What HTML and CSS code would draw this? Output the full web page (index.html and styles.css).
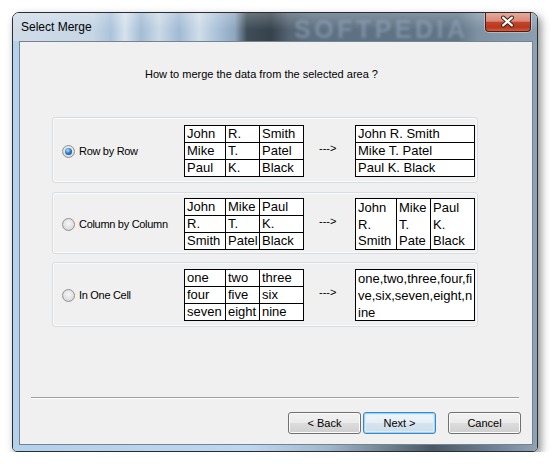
FILE: index.html
```html
<!DOCTYPE html>
<html>
<head>
<meta charset="utf-8">
<link rel="stylesheet" href="styles.css">
</head>
<body>
<div class="window">
  <div class="titlebar">
    <span class="title">Select Merge</span>
    <span class="watermark">SOFTPEDIA</span>
    <span class="close">
      <svg width="46" height="19" viewBox="0 0 46 19">
        <path d="M18.5 5.5 L27.5 13.5 M27.5 5.5 L18.5 13.5" stroke="#3a1610" stroke-width="4.2" stroke-linecap="round" fill="none"/>
        <path d="M18.5 5.5 L27.5 13.5 M27.5 5.5 L18.5 13.5" stroke="#ffffff" stroke-width="2.2" stroke-linecap="round" fill="none"/>
      </svg>
    </span>
  </div>
  <div class="frame">
    <div class="client">
      <p class="question">How to merge the data from the selected area ?</p>

      <div class="panel p1">
        <div class="option"><span class="radio checked"></span><span>Row by Row</span></div>
        <div class="grid g3">
          <span>John</span><span>R.</span><span>Smith</span>
          <span>Mike</span><span>T.</span><span>Patel</span>
          <span>Paul</span><span>K.</span><span>Black</span>
        </div>
        <span class="arrow">---&gt;</span>
        <div class="grid g1">
          <span>John R. Smith</span>
          <span>Mike T. Patel</span>
          <span>Paul K. Black</span>
        </div>
      </div>

      <div class="panel p2">
        <div class="option"><span class="radio"></span><span>Column by Column</span></div>
        <div class="grid g3">
          <span>John</span><span>Mike</span><span>Paul</span>
          <span>R.</span><span>T.</span><span>K.</span>
          <span>Smith</span><span>Patel</span><span>Black</span>
        </div>
        <span class="arrow">---&gt;</span>
        <div class="grid gcol">
          <span>John<br>R.<br>Smith</span>
          <span>Mike<br>T.<br>Pate</span>
          <span>Paul<br>K.<br>Black</span>
        </div>
      </div>

      <div class="panel p3">
        <div class="option"><span class="radio"></span><span>In One Cell</span></div>
        <div class="grid g3">
          <span>one</span><span>two</span><span>three</span>
          <span>four</span><span>five</span><span>six</span>
          <span>seven</span><span>eight</span><span>nine</span>
        </div>
        <span class="arrow">---&gt;</span>
        <div class="grid gone">
          <span>one,two,three,four,fi<br>ve,six,seven,eight,n<br>ine</span>
        </div>
      </div>

      <div class="sep"></div>

      <div class="buttons">
        <button class="btn">&lt; Back</button>
        <button class="btn default">Next &gt;</button>
        <button class="btn cancel">Cancel</button>
      </div>
    </div>
  </div>
</div>
</body>
</html>
```

FILE: styles.css
```css
html, body {
  margin: 0;
  padding: 0;
  background: #ffffff;
  font-family: "Liberation Sans", Arial, sans-serif;
}

.window {
  margin: 12px 0 0 12px;
  width: 526px;
  height: 440px;
  box-sizing: border-box;
  border: 1px solid #2a2e33;
  border-radius: 7px 7px 5px 5px;
  overflow: hidden;
  box-shadow: 3px 4px 9px rgba(0, 0, 0, 0.45);
  display: flex;
  flex-direction: column;
}

.titlebar {
  position: relative;
  height: 28px;
  flex: none;
  display: flex;
  align-items: flex-start;
  background:
    linear-gradient(to bottom, rgba(255,255,255,0.22), rgba(255,255,255,0) 60%),
    linear-gradient(to right,
      #cfdbe7 0px, #c6d6e5 80px, #abc3da 98px, #d6e2ed 112px, #a3bcd5 128px,
      #cbd9e7 146px, #a1bad4 166px, #d0dde9 186px, #aac2d9 204px, #8ea6be 222px,
      #3f4d58 234px, #35424c 258px, #546473 276px, #5d7082 300px, #617587 445px,
      #7e92a4 465px, #8c9fb0 526px);
}

.title {
  padding-left: 8px;
  line-height: 28px;
  font-size: 12px;
  color: #000;
}

.watermark {
  position: absolute;
  left: 281px;
  top: 2px;
  font-size: 25px;
  font-weight: bold;
  letter-spacing: 3.5px;
  color: rgba(150, 170, 190, 0.55);
  filter: blur(1.4px);
}

.close {
  margin-left: auto;
  margin-right: 6px;
  width: 46px;
  height: 19px;
  box-sizing: border-box;
  border: 1px solid #4b1f17;
  border-top: none;
  border-radius: 0 0 4px 4px;
  background: linear-gradient(to bottom, #e6aa99 0%, #d98a78 45%, #c3442d 52%, #b7381f 80%, #d45d3b 100%);
  box-shadow: 0 0 0 1px rgba(255, 255, 255, 0.35);
  display: flex;
}

.close svg {
  display: block;
  margin: -1px 0 0 -1px;
}

.frame {
  flex: 1;
  padding: 0 4px 6px 6px;
  background: linear-gradient(to right, #b3d0ec 0%, #bcd7f0 45%, #9fb8cc 60%, #4a5864 80%, #6f8396 92%, #8fa3b5 100%);
}

.client {
  height: 404px;
  box-sizing: border-box;
  border: 1px solid #76838f;
  background: #f0f0f0;
  display: flex;
  flex-direction: column;
}

.question {
  margin: 25px 0 0 125px;
  font-size: 11px;
  line-height: 14px;
  color: #000;
}

.panel {
  margin-left: 32px;
  width: 426px;
  box-sizing: border-box;
  border: 1px solid #d6dde3;
  border-radius: 3px;
  box-shadow: inset 0 0 0 1px #fafafa;
  display: flex;
  align-items: center;
  padding-left: 9px;
}

.p1 { margin-top: 36px; padding-top: 7px; padding-bottom: 5px; }
.p2 { margin-top: 9px; padding-top: 5px; padding-bottom: 3px; }
.p3 { margin-top: 8px; padding-top: 6px; padding-bottom: 5px; }

.option {
  width: 122px;
  display: flex;
  align-items: center;
  gap: 4px;
  font-size: 11px;
  letter-spacing: -0.3px;
  white-space: nowrap;
  color: #000;
}

.radio {
  width: 13px;
  height: 13px;
  box-sizing: border-box;
  border-radius: 50%;
  border: 1px solid #8e9092;
  background: radial-gradient(circle at 50% 40%, #f6f6f6 0%, #e2e2e2 55%, #cfcfcf 100%);
  display: flex;
  align-items: center;
  justify-content: center;
  flex: none;
}

.radio.checked::after {
  content: "";
  width: 7px;
  height: 7px;
  border-radius: 50%;
  background: radial-gradient(circle at 40% 35%, #bfe4ff 0%, #3a8ad6 40%, #15539b 75%, #0d3a72 100%);
}

.grid {
  display: grid;
  gap: 1px;
  padding: 1px;
  background: #000;
  font-size: 13px;
  line-height: 16px;
  color: #000;
}

.grid > span {
  background: #fff;
  padding: 0 2px;
  white-space: nowrap;
  overflow: hidden;
}

.g3 {
  grid-template-columns: 40px 33px 43px;
  grid-auto-rows: 16px;
}

.g1 {
  grid-template-columns: 118px;
  grid-auto-rows: 16px;
}

.gcol {
  grid-template-columns: 40px 33px 43px;
  grid-template-rows: 50px;
  line-height: 16.5px;
}

.gcol > span {
  padding-top: 1px;
}

.gone {
  grid-template-columns: 118px;
  grid-template-rows: 50px;
  line-height: 17px;
}

.arrow {
  width: 36px;
  padding-left: 15px;
  margin-bottom: 6px;
  font-size: 11px;
  color: #000;
}

.sep {
  margin: 70px 0 0 11px;
  width: 488px;
  height: 1px;
  background: #a0a0a0;
  border-bottom: 1px solid #ffffff;
}

.buttons {
  margin-top: 13px;
  padding-right: 11px;
  display: flex;
  justify-content: flex-end;
  gap: 2px;
}

.btn {
  width: 73px;
  height: 22px;
  box-sizing: border-box;
  border: 1px solid #707070;
  border-radius: 3px;
  background: linear-gradient(to bottom, #f2f2f2 0%, #ebebeb 50%, #dddddd 50%, #cfcfcf 100%);
  box-shadow: inset 0 0 0 1px #fbfbfb;
  font-family: "Liberation Sans", Arial, sans-serif;
  font-size: 11px;
  color: #000;
  padding: 0;
}

.btn.default {
  border-color: #3c85c4;
  background: linear-gradient(to bottom, #f0f6fb 0%, #e4eef6 50%, #d6e4ef 50%, #cfdde8 100%);
  box-shadow: inset 0 0 0 1px #9fd5f2, inset 0 0 0 2px #d6eefb;
}

.btn.cancel {
  margin-left: 10px;
}
```
